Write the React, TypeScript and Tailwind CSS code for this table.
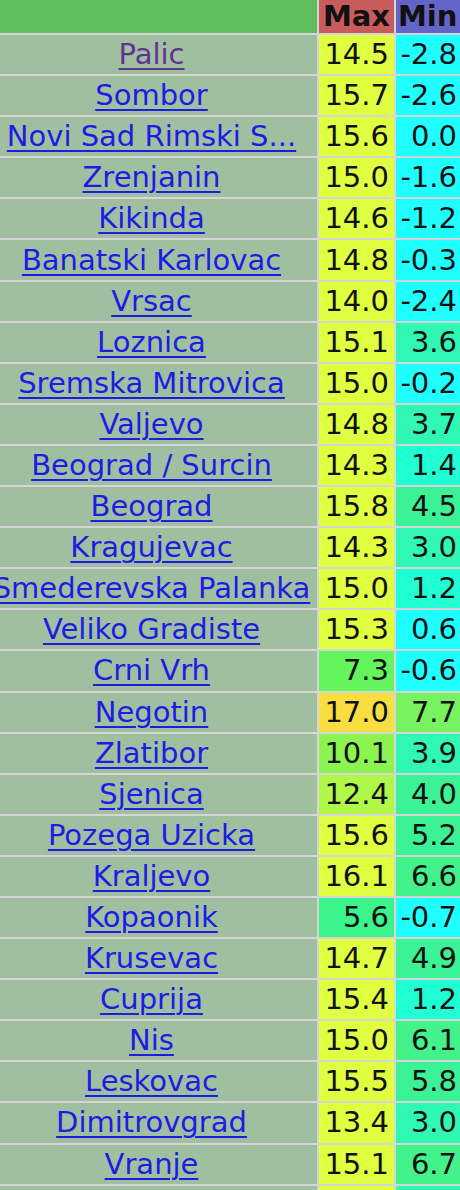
import React from "react";

type Row = { name: string; max: string; min: string; maxBg: string; minBg: string; visited?: boolean };

const Y = "bg-[#dfff40]";
const rows: Row[] = [
  { name: "Palic", max: "14.5", min: "-2.8", maxBg: Y, minBg: "bg-[#20ffff]", visited: true },
  { name: "Sombor", max: "15.7", min: "-2.6", maxBg: Y, minBg: "bg-[#20ffff]" },
  { name: "Novi Sad Rimski S...", max: "15.6", min: "0.0", maxBg: Y, minBg: "bg-[#20ffff]" },
  { name: "Zrenjanin", max: "15.0", min: "-1.6", maxBg: Y, minBg: "bg-[#20ffff]" },
  { name: "Kikinda", max: "14.6", min: "-1.2", maxBg: Y, minBg: "bg-[#20ffff]" },
  { name: "Banatski Karlovac", max: "14.8", min: "-0.3", maxBg: Y, minBg: "bg-[#20ffff]" },
  { name: "Vrsac", max: "14.0", min: "-2.4", maxBg: Y, minBg: "bg-[#20ffff]" },
  { name: "Loznica", max: "15.1", min: "3.6", maxBg: Y, minBg: "bg-[#30f8b4]" },
  { name: "Sremska Mitrovica", max: "15.0", min: "-0.2", maxBg: Y, minBg: "bg-[#20ffff]" },
  { name: "Valjevo", max: "14.8", min: "3.7", maxBg: Y, minBg: "bg-[#30f8b4]" },
  { name: "Beograd / Surcin", max: "14.3", min: "1.4", maxBg: Y, minBg: "bg-[#20ffd4]" },
  { name: "Beograd", max: "15.8", min: "4.5", maxBg: Y, minBg: "bg-[#3cf296]" },
  { name: "Kragujevac", max: "14.3", min: "3.0", maxBg: Y, minBg: "bg-[#30f8b4]" },
  { name: "Smederevska Palanka", max: "15.0", min: "1.2", maxBg: Y, minBg: "bg-[#20ffd4]" },
  { name: "Veliko Gradiste", max: "15.3", min: "0.6", maxBg: Y, minBg: "bg-[#20ffff]" },
  { name: "Crni Vrh", max: "7.3", min: "-0.6", maxBg: "bg-[#64f45c]", minBg: "bg-[#20ffff]" },
  { name: "Negotin", max: "17.0", min: "7.7", maxBg: "bg-[#f8de40]", minBg: "bg-[#78f260]" },
  { name: "Zlatibor", max: "10.1", min: "3.9", maxBg: "bg-[#8cf450]", minBg: "bg-[#30f8b4]" },
  { name: "Sjenica", max: "12.4", min: "4.0", maxBg: "bg-[#b0f848]", minBg: "bg-[#3cf296]" },
  { name: "Pozega Uzicka", max: "15.6", min: "5.2", maxBg: Y, minBg: "bg-[#3cf296]" },
  { name: "Kraljevo", max: "16.1", min: "6.6", maxBg: Y, minBg: "bg-[#44f28c]" },
  { name: "Kopaonik", max: "5.6", min: "-0.7", maxBg: "bg-[#3cf48c]", minBg: "bg-[#20ffff]" },
  { name: "Krusevac", max: "14.7", min: "4.9", maxBg: Y, minBg: "bg-[#3cf296]" },
  { name: "Cuprija", max: "15.4", min: "1.2", maxBg: Y, minBg: "bg-[#20ffd4]" },
  { name: "Nis", max: "15.0", min: "6.1", maxBg: Y, minBg: "bg-[#44f28c]" },
  { name: "Leskovac", max: "15.5", min: "5.8", maxBg: Y, minBg: "bg-[#3cf296]" },
  { name: "Dimitrovgrad", max: "13.4", min: "3.0", maxBg: Y, minBg: "bg-[#30f8b4]" },
  { name: "Vranje", max: "15.1", min: "6.7", maxBg: Y, minBg: "bg-[#44f28c]" },
  { name: "", max: "", min: "", maxBg: Y, minBg: "bg-[#30f8b4]" },
];

export default function App() {
  return (
    <div
      className="w-[460px] h-[1190px] overflow-hidden bg-[#d6d6d6] text-[29px] leading-none text-[#111]"
      style={{ fontFamily: '"DejaVu Sans", Verdana, sans-serif' }}
    >
      <div className="flex flex-col gap-[2px] w-[462px]">
        <div className="flex gap-[2px] h-[33px] font-bold">
          <div className="w-[317px] shrink-0 bg-[#5cbf5c]" />
          <div className="w-[75px] shrink-0 bg-[#c85c5c] flex items-center justify-center">Max</div>
          <div className="w-[66px] shrink-0 bg-[#6464c8] flex items-center justify-start pl-[2px]">Min</div>
        </div>
        {rows.map((r, i) => (
          <div key={i} className="flex gap-[2px] h-[39.1px] shrink-0">
            <div className="w-[317px] shrink-0 bg-[#a0bfa0] flex items-center justify-center pr-[14px] whitespace-nowrap">
              <a
                href="#"
                className={`underline decoration-[2px] underline-offset-[4px] ${r.visited ? "text-[#5c3590]" : "text-[#1c1ce4]"}`}
              >
                {r.name}
              </a>
            </div>
            <div className={`w-[75px] shrink-0 ${r.maxBg} flex items-center justify-end pr-[5px]`}>{r.max}</div>
            <div className={`w-[66px] shrink-0 ${r.minBg} flex items-center justify-end pr-[5px]`}>{r.min}</div>
          </div>
        ))}
      </div>
    </div>
  );
}
